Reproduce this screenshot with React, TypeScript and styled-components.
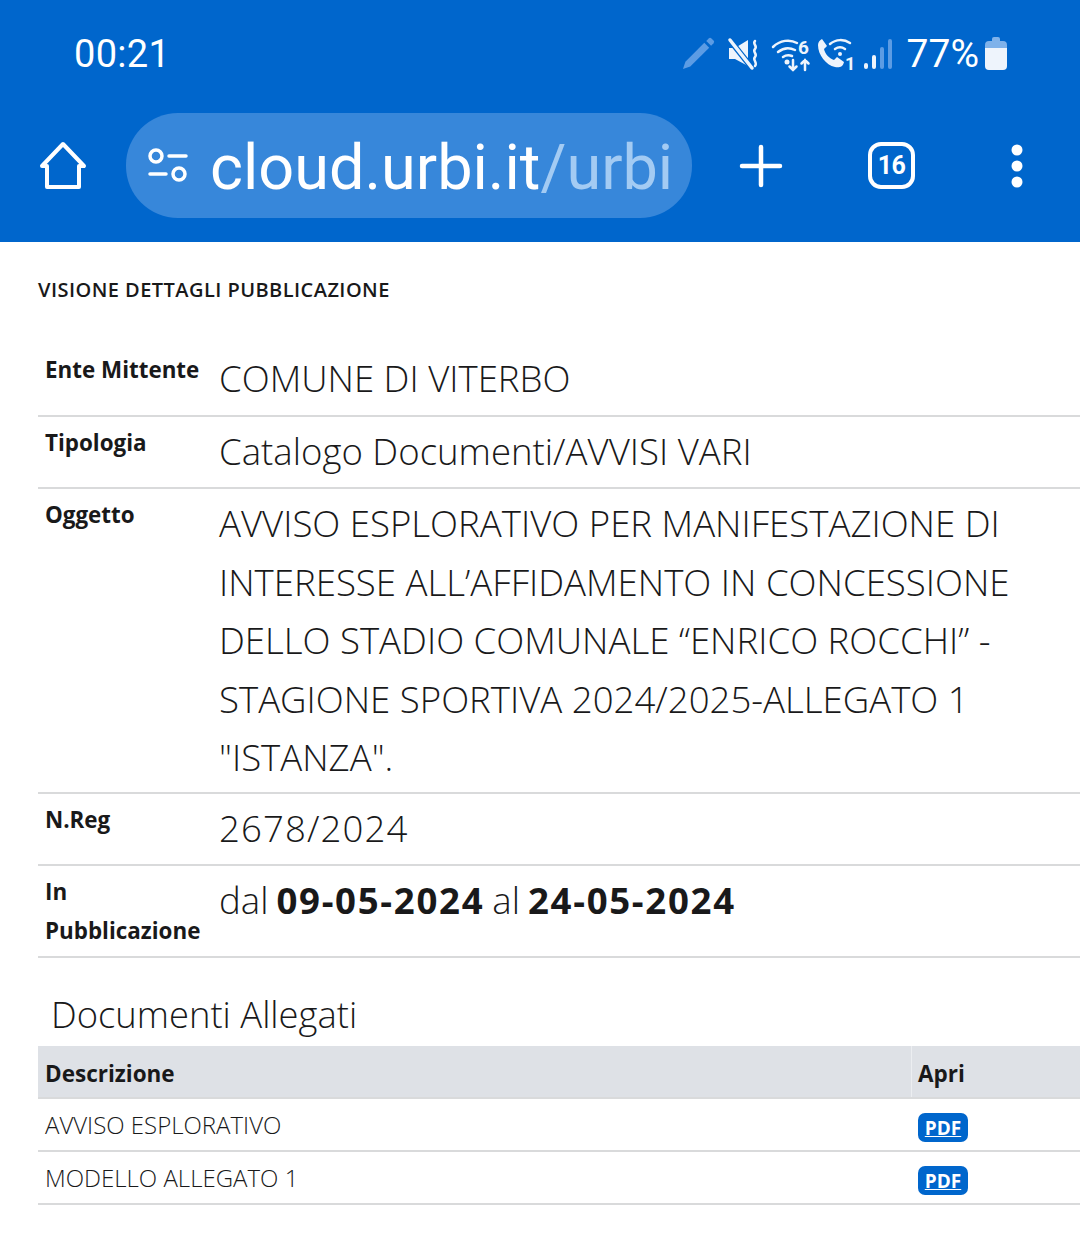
import React from "react";
import styled, { createGlobalStyle } from "styled-components";

const GlobalStyle = createGlobalStyle`
  html, body { margin: 0; padding: 0; background: #fff; }
  body { font-family: "Open Sans", "Noto Sans", sans-serif; color: #19191a; }
`;

const Page = styled.div`
  width: 1080px;
  height: 1241px;
  overflow: hidden;
  background: #fff;
`;

const Header = styled.header`
  background: #0066cc;
  height: 242px;
  display: flex;
  flex-direction: column;
  color: #fff;
`;

const StatusBar = styled.div`
  height: 113px;
  padding: 0 73px 6px 74px;
  box-sizing: border-box;
  display: flex;
  align-items: center;
  justify-content: space-between;
`;

const Clock = styled.span`
  font-family: Roboto, sans-serif;
  font-size: 38px;
  letter-spacing: 0.3px;
`;

const StatusIcons = styled.div`
  display: flex;
  align-items: center;
`;

const Percent = styled.span`
  font-family: Roboto, sans-serif;
  font-size: 39px;
  margin: 0 6px 0 14px;
`;

const Toolbar = styled.div`
  height: 105px;
  display: flex;
  align-items: center;
  padding-left: 38px;
`;

const UrlPill = styled.div`
  width: 566px;
  height: 105px;
  margin-left: 38px;
  margin-right: 48px;
  padding-left: 22px;
  box-sizing: border-box;
  border-radius: 52px;
  background: #3787da;
  display: flex;
  align-items: center;
  overflow: hidden;
`;

const UrlText = styled.span`
  font-family: Roboto, sans-serif;
  font-size: 63px;
  margin: 3px 0 0 22px;
  white-space: nowrap;
`;

const UrlPath = styled.span`
  color: #a3cbf3;
`;

const TabCount = styled.div`
  width: 47px;
  height: 47px;
  box-sizing: border-box;
  margin-left: 86px;
  margin-right: 96px;
  border: 4px solid #fff;
  border-radius: 13px;
  font-family: "Liberation Sans Narrow", Roboto, sans-serif;
  font-weight: 700;
  font-size: 25px;
  letter-spacing: -0.5px;
  display: flex;
  align-items: center;
  justify-content: center;
`;

const Content = styled.main`
  padding: 36px 0 0 38px;
`;

const Title = styled.div`
  font-size: 20px;
  line-height: 24px;
  letter-spacing: 0.45px;
  font-weight: 600;
  margin-bottom: 42px;
`;

const Row = styled.div<{ $h: number }>`
  display: flex;
  height: ${(p) => p.$h}px;
  box-sizing: border-box;
  border-bottom: 2px solid #d9dadb;
`;

const Label = styled.div`
  width: 181px;
  flex: none;
  padding: 6px 0 0 7px;
  box-sizing: border-box;
  font-size: 22.4px;
  line-height: 39px;
  font-weight: 700;
`;

const Value = styled.div<{ $digits?: boolean }>`
  flex: 1;
  padding: 5px 60px 0 0;
  font-size: 36.6px;
  line-height: 58.5px;
  font-weight: 300;
  letter-spacing: ${(p) => (p.$digits ? "1.1px" : "0")};
`;

const Dates = styled(Value)`
  word-spacing: -1.5px;
`;

const DateValue = styled.b`
  font-weight: 700;
  letter-spacing: 1.7px;
`;

const Heading = styled.h2`
  margin: 0;
  padding: 31px 0 0 13px;
  height: 88px;
  box-sizing: border-box;
  font-size: 36.4px;
  line-height: 50px;
  font-weight: 300;
`;

const DocRow = styled.div<{ $head?: boolean }>`
  display: flex;
  align-items: center;
  height: 53px;
  box-sizing: border-box;
  border-bottom: 2px solid #d9dadb;
  background: ${(p) => (p.$head ? "#dee1e6" : "#fff")};
  font-weight: ${(p) => (p.$head ? 700 : 300)};
  font-size: ${(p) => (p.$head ? 22.5 : 24)}px;
`;

const DescCell = styled.div<{ $head?: boolean }>`
  width: 873px;
  padding: ${(p) => (p.$head ? 3 : 0)}px 0 0 7px;
  box-sizing: border-box;
  align-self: stretch;
  display: flex;
  align-items: center;
`;

const OpenCell = styled.div<{ $head?: boolean }>`
  flex: 1;
  padding: ${(p) => (p.$head ? 3 : 0)}px 0 0 6px;
  align-self: stretch;
  display: flex;
  align-items: center;
  border-left: 1px solid ${(p) => (p.$head ? "#eceef1" : "#fff")};
`;

const PdfBadge = styled.a`
  width: 50px;
  height: 29px;
  margin-top: 6px;
  border-radius: 7px;
  background: #0066cc;
  color: #fff;
  font-size: 19px;
  font-weight: 700;
  display: flex;
  align-items: center;
  justify-content: center;
  text-decoration: underline;
`;

const Icon = styled.svg<{ $gap?: number }>`
  display: block;
  flex: none;
  overflow: visible;
  margin-right: ${(p) => p.$gap ?? 0}px;
`;

const Pencil = () => (
  <Icon $gap={13} width="33" height="33" viewBox="0 0 34 34" fill="#5c9ce4">
    <path d="M1 33l2.500-7.500L23 6l5 5L8.500 30.500z" />
    <path d="M25 4l2.500-2.500a2 2 0 0 1 2.800 0l2.200 2.200a2 2 0 0 1 0 2.800L30 9z" />
  </Icon>
);

const Mute = () => (
  <Icon $gap={12} width="32" height="32" viewBox="0 0 32 32" fill="none">
    <path d="M1 10h6L20 2v26L7 21H1z" fill="#eef4fc" />
    <path d="M1 1l23 29" stroke="#0066cc" strokeWidth="6" />
    <path d="M2 2l22 28" stroke="#eef4fc" strokeWidth="3.500" strokeLinecap="round" />
    <path d="M27 3c-3 3 3 5 0 8s3 5 0 8 3 5 0 9" stroke="#eef4fc" strokeWidth="2.500" strokeLinecap="round" />
  </Icon>
);

const WifiData = () => (
  <Icon $gap={3} width="42" height="34" viewBox="0 0 42 34" fill="none">
    <g stroke="#eef4fc" strokeWidth="2.500" strokeLinecap="round">
      <path d="M1 10c7-7 17-8 24-4" />
      <path d="M6 15c5-4 11-5 17-2" />
      <path d="M11 20c3-2 6-2 9-1" />
      <path d="M21 23v10M17.500 29.500l3.500 3.500 3.500-3.500" />
      <path d="M33 33V23M29.500 26.500l3.500-3.500 3.500 3.500" />
    </g>
    <circle cx="15" cy="25" r="2.500" fill="#eef4fc" />
    <text x="26" y="17" fontFamily="Roboto, sans-serif" fontSize="19" fontWeight="700" fill="#eef4fc">6</text>
  </Icon>
);

const WifiCall = () => (
  <Icon $gap={8} width="38" height="34" viewBox="0 0 38 34" fill="none">
    <path d="M5 2l5 7-3 3c1 5 5 9 10 11l3-3 7 5c-1 5-5 6-9 5C9 28 1 18 1 8c0-3 2-5 4-6z" fill="#eef4fc" />
    <g stroke="#eef4fc" strokeWidth="2.500" strokeLinecap="round">
      <path d="M13 7c6-5 14-5 20-1" />
      <path d="M18 12c3-2 7-2 10 0" />
    </g>
    <circle cx="23" cy="17" r="2" fill="#eef4fc" />
    <text x="28" y="33" fontFamily="Roboto, sans-serif" fontSize="18" fontWeight="700" fill="#eef4fc">1</text>
  </Icon>
);

const Signal = () => (
  <Icon width="30" height="32" viewBox="0 0 30 32">
    <rect x="1" y="25" width="4" height="6" rx="2" fill="#eef4fc" />
    <rect x="9" y="17" width="4" height="14" rx="2" fill="#eef4fc" />
    <rect x="17" y="9" width="4" height="22" rx="2" fill="#5c9ce4" />
    <rect x="25" y="1" width="4" height="30" rx="2" fill="#5c9ce4" />
  </Icon>
);

const Battery = () => (
  <Icon width="22" height="33" viewBox="0 0 22 33">
    <path d="M7 2a2 2 0 0 1 2-2h4a2 2 0 0 1 2 2v2h3a4 4 0 0 1 4 4v3H0V8a4 4 0 0 1 4-4h3z" fill="#7fb2ea" />
    <path d="M0 11h22v18a4 4 0 0 1-4 4H4a4 4 0 0 1-4-4z" fill="#eef4fc" />
  </Icon>
);

const HomeIcon = () => (
  <Icon width="50" height="50" viewBox="0 0 50 50" fill="none" stroke="#fff" strokeWidth="4" strokeLinejoin="round" strokeLinecap="round">
    <path d="M4 25L25 3l21 22h-5v21H9V25z" />
  </Icon>
);

const TuneIcon = () => (
  <Icon width="40" height="36" viewBox="0 0 40 36" fill="none" stroke="#fff" strokeWidth="3.500" strokeLinecap="round">
    <circle cx="8" cy="8" r="6" />
    <path d="M21 8h17M2 26h16" />
    <circle cx="31" cy="26" r="6" />
  </Icon>
);

const PlusIcon = () => (
  <Icon width="42" height="42" viewBox="0 0 42 42" stroke="#fff" strokeWidth="4.500" strokeLinecap="round">
    <path d="M21 2v38M2 21h38" />
  </Icon>
);

const MoreIcon = () => (
  <Icon width="12" height="44" viewBox="0 0 12 44" fill="#fff">
    <circle cx="6" cy="6" r="5.500" />
    <circle cx="6" cy="22" r="5.500" />
    <circle cx="6" cy="38" r="5.500" />
  </Icon>
);

export default function App() {
  return (
    <Page>
      <GlobalStyle />
      <Header>
        <StatusBar>
          <Clock>00:21</Clock>
          <StatusIcons>
            <Pencil />
            <Mute />
            <WifiData />
            <WifiCall />
            <Signal />
            <Percent>77%</Percent>
            <Battery />
          </StatusIcons>
        </StatusBar>
        <Toolbar>
          <HomeIcon />
          <UrlPill>
            <TuneIcon />
            <UrlText>
              cloud.urbi.it<UrlPath>/urbi</UrlPath>
            </UrlText>
          </UrlPill>
          <PlusIcon />
          <TabCount>16</TabCount>
          <MoreIcon />
        </Toolbar>
      </Header>
      <Content>
        <Title>VISIONE DETTAGLI PUBBLICAZIONE</Title>
        <Row $h={73}>
          <Label>Ente Mittente</Label>
          <Value>COMUNE DI VITERBO</Value>
        </Row>
        <Row $h={72}>
          <Label>Tipologia</Label>
          <Value>Catalogo Documenti/AVVISI VARI</Value>
        </Row>
        <Row $h={305}>
          <Label>Oggetto</Label>
          <Value>
            AVVISO ESPLORATIVO PER MANIFESTAZIONE DI INTERESSE ALL’AFFIDAMENTO IN CONCESSIONE DELLO STADIO COMUNALE “ENRICO ROCCHI” - STAGIONE SPORTIVA 2024/2025-ALLEGATO 1 "ISTANZA".
          </Value>
        </Row>
        <Row $h={72}>
          <Label>N.Reg</Label>
          <Value $digits>2678/2024</Value>
        </Row>
        <Row $h={92}>
          <Label>In Pubblicazione</Label>
          <Dates>
            dal <DateValue>09-05-2024</DateValue> al <DateValue>24-05-2024</DateValue>
          </Dates>
        </Row>
        <Heading>Documenti Allegati</Heading>
        <DocRow $head>
          <DescCell $head>Descrizione</DescCell>
          <OpenCell $head>Apri</OpenCell>
        </DocRow>
        <DocRow>
          <DescCell>AVVISO ESPLORATIVO</DescCell>
          <OpenCell>
            <PdfBadge>PDF</PdfBadge>
          </OpenCell>
        </DocRow>
        <DocRow>
          <DescCell>MODELLO ALLEGATO 1</DescCell>
          <OpenCell>
            <PdfBadge>PDF</PdfBadge>
          </OpenCell>
        </DocRow>
      </Content>
    </Page>
  );
}
